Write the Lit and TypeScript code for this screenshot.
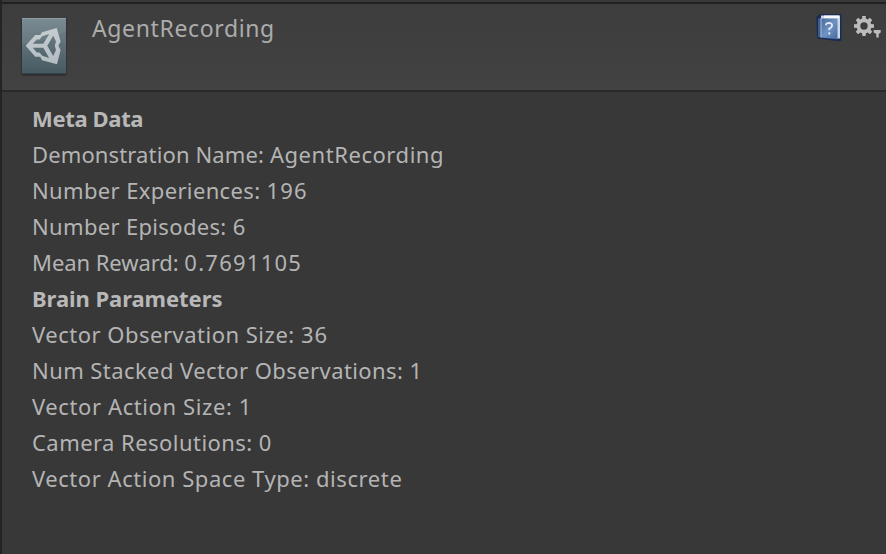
import { LitElement, html, svg, css } from "lit";
import { customElement } from "lit/decorators.js";

interface Row {
  label: string;
  spacing: number;
  value?: string;
  valueSpacing?: number;
}

const ROWS: Row[] = [
  { label: "Meta Data", spacing: -0.35 },
  { label: "Demonstration Name: ", spacing: 0.13, value: "AgentRecording", valueSpacing: 0.55 },
  { label: "Number Experiences: ", spacing: 0.36, value: "196", valueSpacing: 1.1 },
  { label: "Number Episodes: ", spacing: 0.33, value: "6" },
  { label: "Mean Reward: ", spacing: -0.06, value: "0.7691105", valueSpacing: 1.25 },
  { label: "Brain Parameters", spacing: -0.06 },
  { label: "Vector Observation Size: ", spacing: 0.5, value: "36", valueSpacing: 1 },
  { label: "Num Stacked Vector Observations: ", spacing: 0.42, value: "1" },
  { label: "Vector Action Size: ", spacing: 0.6, value: "1" },
  { label: "Camera Resolutions: ", spacing: 0.45, value: "0" },
  { label: "Vector Action Space Type: ", spacing: 0.54, value: "discrete", valueSpacing: 0.6 },
];

const TEETH = [0, 45, 90, 135, 180, 225, 270, 315];

@customElement("app-root")
export class AppRoot extends LitElement {
  static styles = css`
    :host {
      display: flex;
      flex-direction: column;
      box-sizing: border-box;
      height: 554px;
      padding-top: 2px;
      border-left: 2px solid #242424;
      background: #383838;
      color: #b4b4b4;
      font-family: "Noto Sans", "Open Sans", sans-serif;
      overflow: hidden;
    }
    header {
      display: flex;
      align-items: flex-start;
      box-sizing: border-box;
      height: 90px;
      padding: 14px 5px 0 20px;
      border-top: 2px solid #202020;
      border-bottom: 2px solid #292929;
      background: linear-gradient(#3d3d3d, #424242);
    }
    svg {
      display: block;
      flex: none;
    }
    .asset {
      filter: drop-shadow(0 1px 1px rgba(0, 0, 0, 0.5));
    }
    h1 {
      flex: 1;
      margin: -8px 0 0 26px;
      font-size: 23px;
      line-height: 36px;
      font-weight: 400;
      letter-spacing: 0.63px;
      color: #acacac;
    }
    .help {
      margin-top: -4px;
    }
    .gear {
      margin: -4px 0 0 11px;
    }
    main {
      padding: 8px 0 0 30px;
      font-size: 22px;
      line-height: 36px;
      white-space: pre;
    }
    .heading {
      font-weight: 700;
      color: #b8b8b8;
    }
  `;

  private assetIcon() {
    return svg`<svg class="asset" width="44" height="56" viewBox="22 18 44 56">
      <defs>
        <linearGradient id="tile" x1="0" y1="0" x2="0" y2="1">
          <stop offset="0" stop-color="#74858d" />
          <stop offset="0.4" stop-color="#62737b" />
          <stop offset="0.75" stop-color="#52646b" />
          <stop offset="1" stop-color="#465961" />
        </linearGradient>
        <linearGradient id="mark" x1="0" y1="0" x2="0" y2="1">
          <stop offset="0" stop-color="#c6cdd1" />
          <stop offset="1" stop-color="#b3bcc1" />
        </linearGradient>
      </defs>
      <rect x="22" y="18" width="44" height="56" fill="url(#tile)" />
      <path d="M22 18H66V31Q50 41 22 44Z" fill="#fff" opacity="0.05" />
      <path d="M22 18.5H66" stroke="#8d9ea6" />
      <path d="M22 73.5H66" stroke="#33454d" />
      <path fill="url(#mark)" fill-rule="evenodd" d="M25.6 45.8L35.3 35H40.2L42 32.2L56.8 28L60.6 41.6L58.4 45.8L60.6 50L57 64.3L42 60.2L40.2 56.8H35.3Z
        M32.8 43.8H43.3L49.2 33.9L42.3 36.2L39.5 39.4H36.8Z
        M32.8 47.8H43.3L49.2 58.1L42.3 55.8L39.5 52.4H36.8Z
        M47.3 45.8L53.2 35.8L56 41.6L54.8 45.8L56 50L53.2 56Z" />
    </svg>`;
  }

  private helpIcon() {
    return svg`<svg class="help" width="26" height="28" viewBox="816 14 26 28">
      <defs>
        <linearGradient id="cover" x1="0" y1="0" x2="1" y2="1">
          <stop offset="0" stop-color="#4a6a98" />
          <stop offset="0.5" stop-color="#6f92c2" />
          <stop offset="1" stop-color="#466a9f" />
        </linearGradient>
      </defs>
      <path d="M816.3 17L820 14H841.5V41.3H838L817 38.5Z" fill="#1b2c50" />
      <path d="M821 15.5H840V38.5H836V19H821Z" fill="#cbd8ea" />
      <path d="M824 15.5H839V18.3H824Z" fill="#f6f9fc" />
      <path d="M818 18L821 19V37.5L818 37Z" fill="#3c5a8b" />
      <path d="M821 18.5H837.5V39.3L821 37.5Z" fill="url(#cover)" />
      <path d="M821 18V37.5" stroke="#9db4d4" stroke-width="1.2" />
      <path d="M826 25.3Q826 22.9 829 22.9Q832.2 23 832 25.8Q831.7 27.6 829.3 28.6V30.3M829.3 32.2V34.4" fill="none" stroke="#dfe8f4" stroke-width="1.9" />
    </svg>`;
  }

  private gearIcon() {
    return svg`<svg class="gear" width="28" height="28" viewBox="853 14 28 28">
      <g fill="#bcbcbc">
        ${TEETH.map((a) => svg`<path transform="rotate(${a} 864 26)" d="M861.9 21L862.3 16H865.7L866.1 21Z" />`)}
        <path d="M873.7 30H880.7V32.5L878.7 34V37.5H876.3V34L873.7 32.5Z" />
      </g>
      <circle cx="864" cy="26" r="5.6" fill="none" stroke="#bcbcbc" stroke-width="3.8" />
    </svg>`;
  }

  private row(r: Row) {
    return html`<div class=${r.value ? "field" : "heading"}><span style="letter-spacing:${r.spacing}px">${r.label}</span>${
      r.value ? html`<span style="letter-spacing:${r.valueSpacing ?? 0}px">${r.value}</span>` : ""
    }</div>`;
  }

  render() {
    return html`
      <header>
        ${this.assetIcon()}
        <h1>AgentRecording</h1>
        ${this.helpIcon()} ${this.gearIcon()}
      </header>
      <main>${ROWS.map((r) => this.row(r))}</main>
    `;
  }
}
